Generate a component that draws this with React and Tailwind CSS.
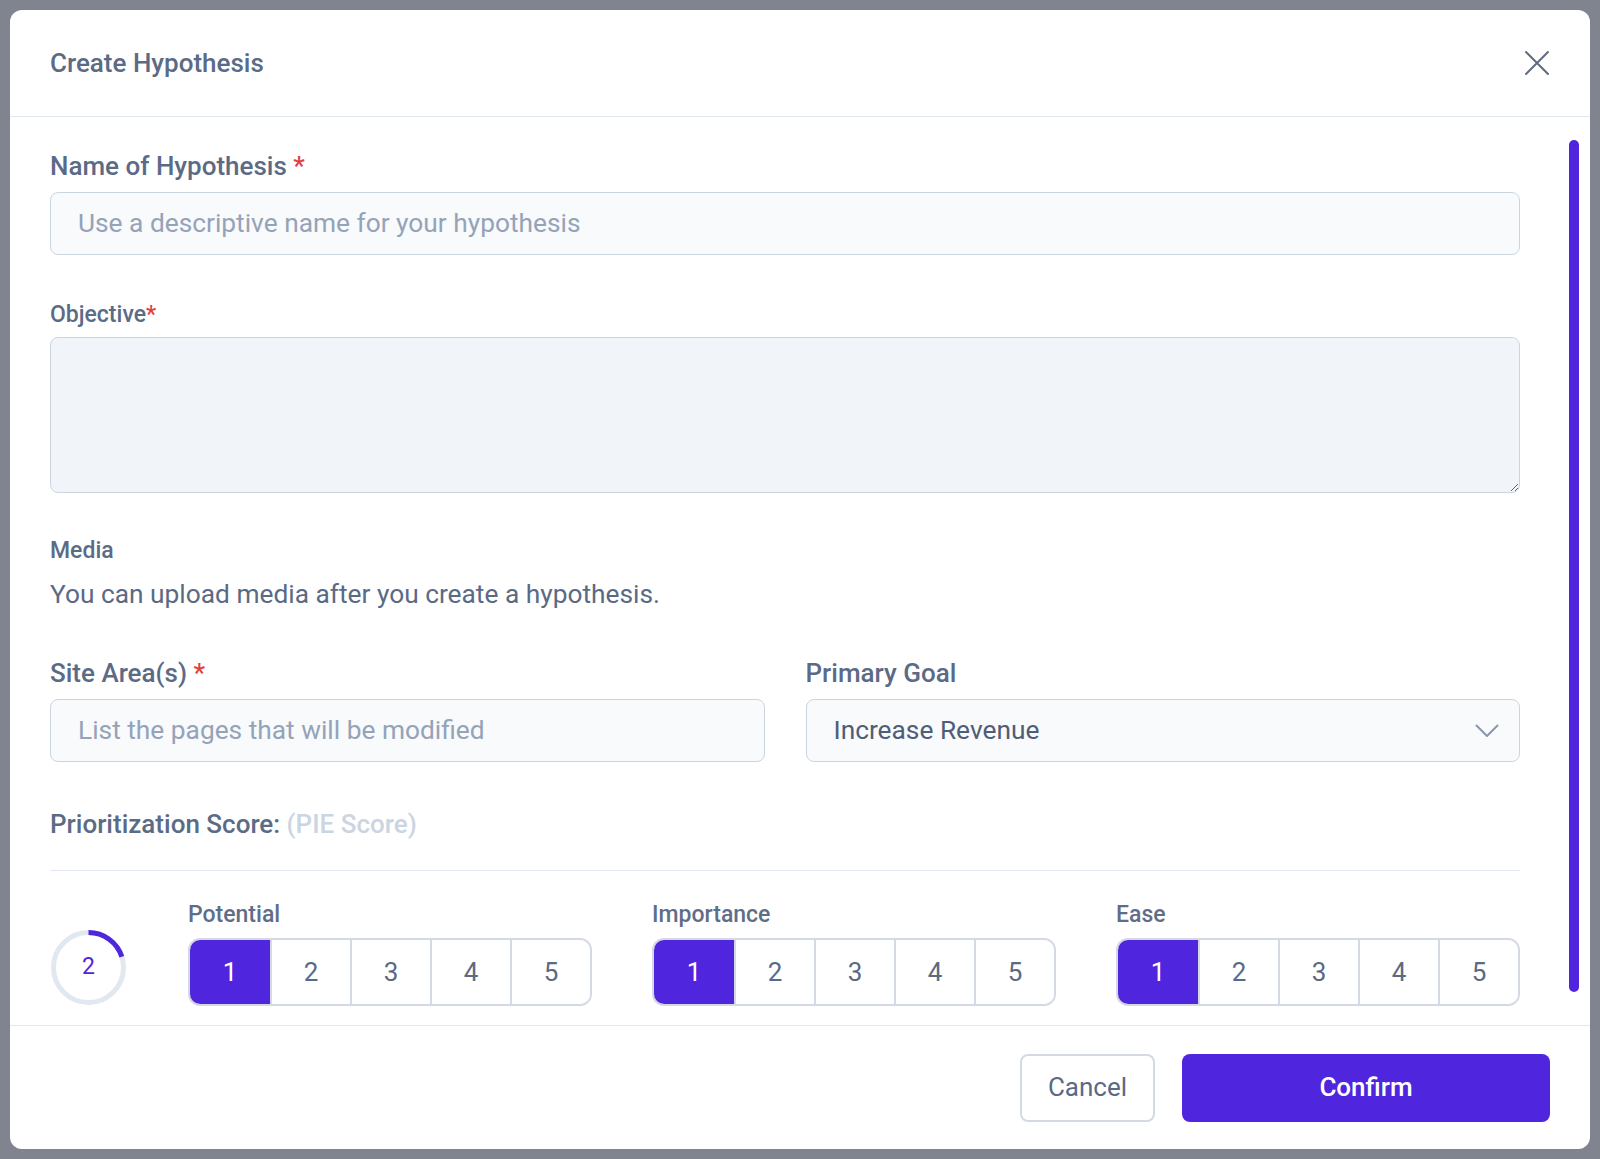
import React from "react";

function Segmented({ label }) {
  const nums = [1, 2, 3, 4, 5];
  return (
    <div className="flex flex-col">
      <div className="h-[28px] leading-[28px] text-[23px] font-medium text-[#5f6e88]">{label}</div>
      <div className="mt-[9px] h-[68px] grid grid-cols-5 rounded-[12px] border-2 border-[#d3dae5] overflow-hidden">
        {nums.map((n) => (
          <div
            key={n}
            className={
              n === 1
                ? "flex items-center justify-center bg-[#4f26dd] text-white text-[26px]"
                : "flex items-center justify-center bg-white text-[#5a6a85] text-[26px] border-l-2 border-[#d3dae5]"
            }
          >
            {n}
          </div>
        ))}
      </div>
    </div>
  );
}

function ScoreCircle() {
  const r = 35;
  const c = 2 * Math.PI * r;
  const frac = 0.2;
  return (
    <div className="relative w-[77px] h-[77px]">
      <svg width="77" height="77" viewBox="0 0 77 77" className="absolute inset-0">
        <circle cx="38.5" cy="38.5" r={r} fill="none" stroke="#e2e8f0" strokeWidth="5" />
        <circle
          cx="38.5"
          cy="38.5"
          r={r}
          fill="none"
          stroke="#4f26dd"
          strokeWidth="5"
          strokeDasharray={`${c * frac} ${c}`}
          transform="rotate(-90 38.5 38.5)"
        />
      </svg>
      <div className="absolute inset-0 flex items-center justify-center text-[23px] text-[#4f26dd]">2</div>
    </div>
  );
}

export default function App() {
  return (
    <div
      className="w-full h-[1159px] bg-[#80848f] overflow-hidden"
      style={{ fontFamily: "Roboto, 'Liberation Sans', sans-serif" }}
    >
      <div className="pt-[10px] px-[10px]">
        <div className="relative w-[1580px] h-[1139px] bg-white rounded-[12px] flex flex-col overflow-hidden">
          {/* Header */}
          <div className="h-[107px] shrink-0 flex items-center justify-between pl-[40px] pr-[40px] border-b border-[#e2e8f0]">
            <div className="text-[26px] font-medium text-[#5b6b86]">Create Hypothesis</div>
            <svg width="26" height="26" viewBox="0 0 26 26" fill="none">
              <path d="M2 2 L24 24 M24 2 L2 24" stroke="#5f6b7f" strokeWidth="2" strokeLinecap="round" />
            </svg>
          </div>

          {/* Body */}
          <div className="h-[908px] shrink-0 overflow-hidden pl-[40px] pr-[70px] pt-[33px]">
            <div className="h-[32px] leading-[32px] text-[26px] font-medium text-[#5b6b86]">
              Name of Hypothesis <span className="text-[#e53e3e]">*</span>
            </div>
            <div className="mt-[10px] h-[63px] rounded-[8px] border border-[#cbd5e1] bg-[#f8fafc] px-[27px] flex items-center text-[26.3px] text-[#94a3b8]">
              Use a descriptive name for your hypothesis
            </div>

            <div className="mt-[46px] h-[28px] leading-[28px] text-[23px] font-medium text-[#5b6b86]">
              Objective<span className="text-[#e53e3e]">*</span>
            </div>
            <textarea
              className="mt-[8px] block w-full h-[156px] rounded-[8px] border border-[#cbd5e1] bg-[#f1f5f9] resize-y outline-none"
              defaultValue=""
            />

            <div className="mt-[44px] h-[28px] leading-[28px] text-[23px] font-medium text-[#5b6b86]">Media</div>
            <div className="mt-[13px] h-[32px] leading-[32px] text-[26.3px] text-[#5a6a85]">
              You can upload media after you create a hypothesis.
            </div>

            <div className="mt-[47px] grid grid-cols-2 gap-x-[41px]">
              <div>
                <div className="h-[32px] leading-[32px] text-[26px] font-medium text-[#5b6b86]">
                  Site Area(s) <span className="text-[#e53e3e]">*</span>
                </div>
                <div className="mt-[10px] h-[63px] rounded-[8px] border border-[#cbd5e1] bg-[#f8fafc] px-[27px] flex items-center text-[26.3px] text-[#94a3b8]">
                  List the pages that will be modified
                </div>
              </div>
              <div>
                <div className="h-[32px] leading-[32px] text-[26px] font-medium text-[#5b6b86]">Primary Goal</div>
                <div className="mt-[10px] h-[63px] rounded-[8px] border border-[#cbd5e1] bg-[#f8fafc] pl-[27px] pr-[20px] flex items-center justify-between text-[26.3px] text-[#4f5d76]">
                  <span>Increase Revenue</span>
                  <svg width="24" height="14" viewBox="0 0 24 14" fill="none">
                    <path d="M1.5 1.5 L12 12 L22.5 1.5" stroke="#8a97ab" strokeWidth="2" strokeLinecap="round" strokeLinejoin="round" />
                  </svg>
                </div>
              </div>
            </div>

            <div className="mt-[46px] h-[32px] leading-[32px] text-[26px] font-medium text-[#5b6b86]">
              Prioritization Score: <span className="text-[#cbd5e1]">(PIE Score)</span>
            </div>
            <div className="mt-[30px] h-px bg-[#e2e8f0]" />

            <div className="mt-[30px] grid grid-cols-[78px_404px_404px_404px] gap-x-[60px] items-end">
              <div className="flex items-end">
                <ScoreCircle />
              </div>
              <Segmented label="Potential" />
              <Segmented label="Importance" />
              <Segmented label="Ease" />
            </div>
          </div>

          {/* Footer */}
          <div className="h-[124px] shrink-0 border-t border-[#e2e8f0] flex items-center justify-end pr-[40px] gap-[27px]">
            <button className="w-[135px] h-[68px] rounded-[8px] border-2 border-[#d3dae5] bg-white text-[26px] text-[#5a6a85]">
              Cancel
            </button>
            <button className="w-[368px] h-[68px] rounded-[8px] bg-[#4f26dd] text-white text-[26px] font-medium">
              Confirm
            </button>
          </div>

          {/* Scrollbar thumb */}
          <div className="absolute left-[1559px] top-[130px] w-[10px] h-[852px] rounded-full bg-[#4f26dd]" />
        </div>
      </div>
    </div>
  );
}
